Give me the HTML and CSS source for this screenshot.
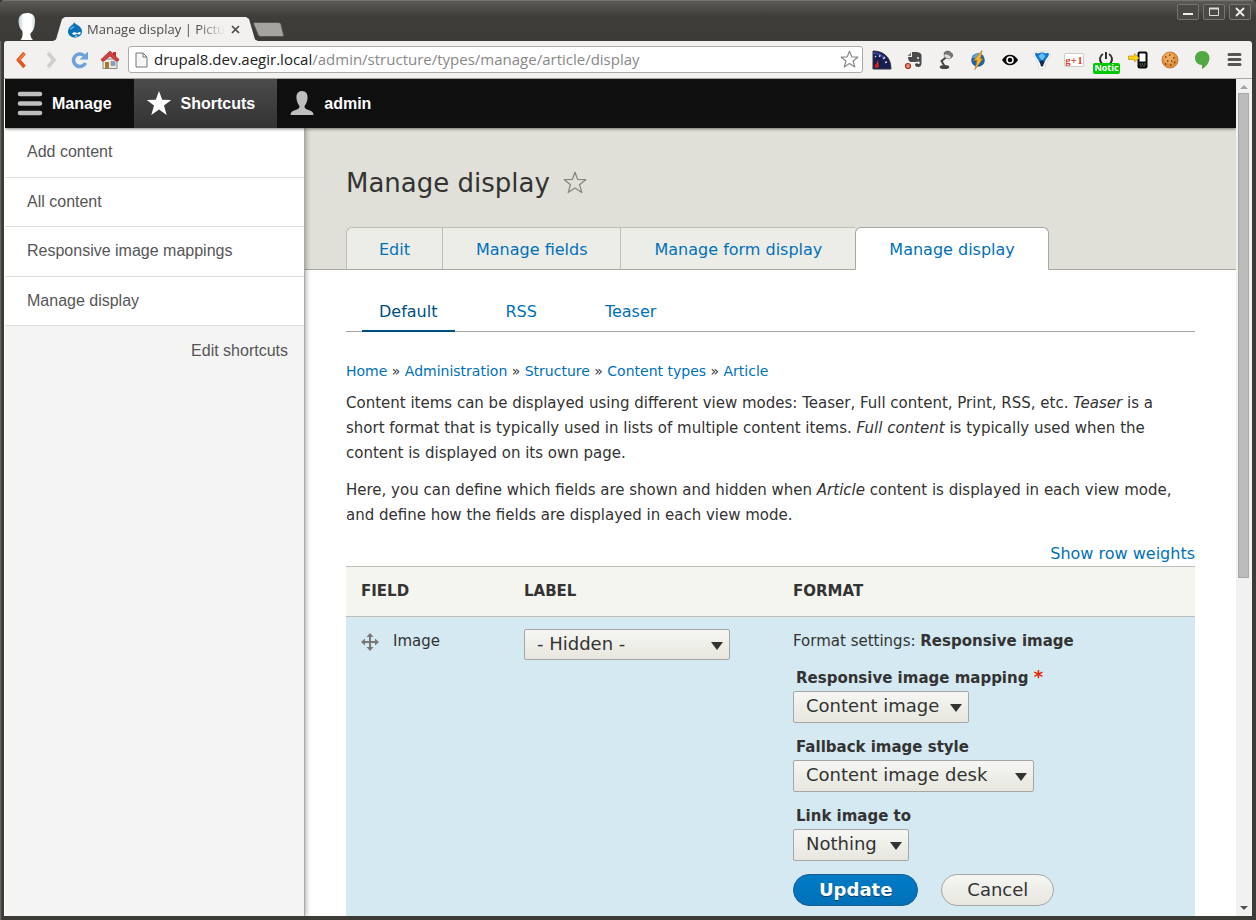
FILE: index.html
```html
<!DOCTYPE html>
<html lang="en">
<head>
<meta charset="utf-8">
<title>Manage display | Picture</title>
<link rel="stylesheet" href="styles.css">
</head>
<body>
<div class="window">
  <header class="titlebar">
    <svg class="ghost" width="20" height="29" viewBox="0 0 20 29" aria-hidden="true">
      <defs><linearGradient id="head" x1="0" x2="1"><stop offset="0" stop-color="#b9cad3"/><stop offset=".3" stop-color="#fff"/><stop offset=".75" stop-color="#fff"/><stop offset="1" stop-color="#cbd8de"/></linearGradient></defs>
      <path fill="url(#head)" d="M9 1c5 0 8 2.500 8 7 0 4-.5 8-2 10.500-.8 1.500-2 2-2.500 3-.3 2.500.5 4.500 2.500 6.500H2.500c2-2.500 2.500-6 1.800-9C1.500 16.500.5 12.500.5 9 .5 4 4 1 9 1z"/>
    </svg>
    <div class="tab">
      <svg width="16" height="17" viewBox="0 0 16 17" aria-hidden="true">
        <path fill="#0a72b8" d="M7 1c1 2 3 2.500 5 4 2 1.500 3 3.500 3 5.500C15 14 12 16.500 8 16.500S1 14 1 10.500C1 7 3 5.500 5 4 6 3.200 6.800 2.500 7 1z"/>
        <path fill="#6bb4e2" d="M3 8c1-2 3-2.500 4-3 1 0 0 1.500-1.500 2.500S3 9.500 3 8z"/>
        <path fill="#fff" d="M7.800 11.200c1 0 2 .8 2.500.8s1.500-1 2.700-1c1 0 1 2.500-.5 2.500-1 0-1.500-.8-2-.8-.7 0-1.500 1-3.200 1-3 0-2.500-2.500.5-2.500zM7.500 15c1-.8 2.500-.8 3.500 0-.8.700-2.800.7-3.500 0z"/>
      </svg>
      <span class="tab-title">Manage display | Pictu</span>
      <button class="tab-close" aria-label="Close tab"><svg width="9" height="9" viewBox="0 0 9 9"><path d="M1 1l7 7M8 1L1 8" stroke="#4a4a4a" stroke-width="1.700"/></svg></button>
    </div>
    <button class="new-tab" aria-label="New tab"><svg width="31" height="15" viewBox="0 0 31 15"><path d="M2 .5h23c2 0 2.500.8 3 2l2.500 10c.3 1.300-.2 2-1.500 2H8c-2 0-2.500-.8-3-2L.8 2.500C.4 1 .8.500 2 .500z" fill="#a5a49f" stroke="#55544f"/></svg></button>
    <div class="window-buttons">
      <button aria-label="Minimize"><svg width="12" height="12" viewBox="0 0 12 12"><path d="M1 8h10" stroke="#eeeeea" stroke-width="2"/></svg></button>
      <button aria-label="Maximize"><svg width="12" height="12" viewBox="0 0 12 12"><path d="M1.500 2.500h9v7h-9z" fill="none" stroke="#deded9"/><path d="M1 2.500h10" stroke="#deded9" stroke-width="2"/></svg></button>
      <button aria-label="Close"><svg width="12" height="12" viewBox="0 0 12 12"><path d="M2 2l8 8M10 2l-8 8" stroke="#eeeeea" stroke-width="1.800"/></svg></button>
    </div>
  </header>

  <div class="navbar">
    <button class="nav-button" aria-label="Back"><svg width="18" height="20" viewBox="0 0 18 20"><path d="M11.500 3L5.500 10l6 7" fill="none" stroke="#e2571e" stroke-width="3.600"/><path d="M11.500 3.500L6 10" fill="none" stroke="#f08546" stroke-width="1.500"/></svg></button>
    <button class="nav-button" aria-label="Forward"><svg width="18" height="20" viewBox="0 0 18 20"><path d="M6 3l6 7-6 7" fill="none" stroke="#d0cfcd" stroke-width="3.600"/></svg></button>
    <button class="nav-button" aria-label="Reload"><svg width="18" height="20" viewBox="0 0 18 20"><path d="M14.500 13A6.300 6.300 0 1 1 13 5.500" fill="none" stroke="#6fa3d8" stroke-width="3.600"/><path d="M17 1.500v8H8.500z" fill="#6fa3d8"/></svg></button>
    <button class="nav-button home" aria-label="Home"><svg width="20" height="20" viewBox="0 0 20 20"><path d="M13 2h3v5h-3z" fill="#c33"/><path d="M3 9h14v9.500H3z" fill="#eceae4" stroke="#8c8a84"/><path d="M5 12h4v6.500H5z" fill="#a9792b"/><path d="M11 11.500h4v4h-4z" fill="#7ba4cf" stroke="#888" stroke-width=".6"/><path d="M10 1L1 9.500l1 1.500h2l6-5 6 5h2l1-1.500z" fill="#cf4040" stroke="#a82a2a" stroke-width=".7"/></svg></button>
    <div class="omnibox">
      <svg width="13" height="16" viewBox="0 0 13 16" aria-hidden="true"><path d="M1 1h7l4 4v10H1z" fill="#f7f7f7" stroke="#777"/><path d="M8 1v4h4" fill="none" stroke="#777"/></svg>
      <div class="url" role="textbox" aria-label="Address">drupal8.dev.aegir.local<span class="path">/admin/structure/types/manage/article/display</span></div>
      <button class="bookmark" aria-label="Bookmark"><svg width="19" height="19" viewBox="0 0 19 19"><path d="M9.500 1.200l2.300 5.700 6 .3-4.700 3.800 1.700 6-5.300-3.500-5.300 3.500 1.700-6L1.200 7.200l6-.3z" fill="#fff" stroke="#8a8a8a" stroke-width="1.200" stroke-linejoin="round"/></svg></button>
    </div>
    <div class="extensions">
      <button aria-label="Speed"><svg width="20" height="20" viewBox="0 0 20 20"><path d="M1 1c9 0 18 5 18 18H1z" fill="#171d50" stroke="#34343e"/><path d="M1 3c5 0 9 2 12 6" fill="none" stroke="#35449a" stroke-width="2"/><path d="M3 6l1 1M8 5l-.5 2M13 7l-2 2M15 12l-2 .5" stroke="#dde" stroke-width="1.300"/><path d="M3 17l3-7 .8 7z" fill="#e32"/><circle cx="4.500" cy="16" r="2" fill="#c21"/></svg></button>
      <button aria-label="Clipper"><svg width="20" height="20" viewBox="0 0 20 20"><path d="M8 2h5c3 .5 4.500 1.500 4.500 3.500v7c0 3-1 4.500-3.500 4.500-2 0-3-1-3-3l2-1 1 1h1.500v-2.500L11 12H7c-2 0-3-2.500-3-5h4z" fill="#4a4a4a"/><path d="M3.500 6L7 2.500V6z" fill="#777"/><circle cx="14" cy="8" r="1" fill="#eee"/><circle cx="4" cy="16" r="2.500" fill="#ef8c75" stroke="#a82a1c" stroke-width="1.200"/></svg></button>
      <button aria-label="Lamp"><svg width="20" height="20" viewBox="0 0 20 20"><ellipse cx="8.500" cy="17" rx="4.800" ry="2" fill="#454545"/><path d="M8.500 16l-3-5 5-4" fill="none" stroke="#444" stroke-width="2"/><path d="M8 4c0-3 5-4 7.500-1 2 2 1 4-.5 5-2-2-4-3-7-4z" fill="#777" stroke="#4c4c4c" stroke-width=".8"/><ellipse cx="11.500" cy="6.500" rx="3.800" ry="2" transform="rotate(25 11.500 6.500)" fill="#ddd" stroke="#777" stroke-width=".6"/></svg></button>
      <button aria-label="Lightning"><svg width="20" height="20" viewBox="0 0 20 20"><circle cx="10" cy="10" r="6.800" fill="#1d64aa"/><path d="M4 8c2-4 5-5 8-4L9 8z" fill="#64a5d7"/><path d="M14 .5L5.500 10.500l3.500-.3L7 19.500l8-11-2.500.5z" fill="#f8b52c" stroke="#a46c12" stroke-width=".6"/></svg></button>
      <button aria-label="Eye"><svg width="20" height="20" viewBox="0 0 20 20"><path d="M2 10c4-7 12-7 16 0-4 7-12 7-16 0z" fill="#0a0a0a"/><circle cx="10" cy="10" r="3.800" fill="#fff"/><circle cx="10" cy="10" r="2.300" fill="#0a0a0a"/></svg></button>
      <button aria-label="Filter"><svg width="20" height="20" viewBox="0 0 20 20"><path d="M1.500 4c.5-2 2.500-3 4.500-2 2-1 6-1 8 0 2-1 4 0 4.500 2s-3.500 7-5 10v4c-2 1-5 1-7 0v-4C5 11 1.500 6 1.500 4z" fill="#fff" stroke="#ccc" stroke-width=".6"/><path d="M3 4c.5-1.500 2-1.500 3-.5 2-1.500 6-1.500 8 0 1-1 2.500-1 3 .5 0 2-3 5-4.500 8.500h-5C6 9 3 6 3 4z" fill="#1676c9"/><path d="M6.500 6L10 3l3.500 3L10 11z" fill="#68bdf1"/><path d="M7.500 11.500L10 10l2.500 1.500-1.500 5H9z" fill="#122c52"/></svg></button>
      <button class="plus-one" aria-label="Plus one">g+1</button>
      <button class="power" aria-label="Notices"><svg width="20" height="20" viewBox="0 0 20 20"><path d="M7 4a6 6 0 1 0 6 0" fill="none" stroke="#333" stroke-width="2"/><path d="M10 2v7" stroke="#333" stroke-width="2"/></svg><span class="badge">Notic</span></button>
      <button aria-label="Send to phone"><svg width="20" height="20" viewBox="0 0 20 20"><rect x="9.500" y="1.500" width="10" height="17" rx="2" fill="#0b0b0b"/><path d="M11.500 3.500h6v8h-6z" fill="#fff"/><path d="M11.500 14h1M14 14h1M16.500 14h1M12.500 16h1M15.500 16h1" stroke="#ccc"/><path d="M.5 6h6V3.500L11 8l-4.500 4V9.500h-6z" fill="#fbd315" stroke="#b88c0b" stroke-width=".7"/></svg></button>
      <button aria-label="Cookies"><svg width="20" height="20" viewBox="0 0 20 20"><circle cx="10" cy="10" r="8" fill="#dc8f3e" stroke="#c67a32"/><circle cx="9" cy="8" r="5.500" fill="#eaa95b"/><path d="M5 7h1.400M9 5h1.400M13 8h1.400M7 11h1.400M11 11h1.400M5 14h1.400M10 15h1.400M14 12.500h1.400" stroke="#713913" stroke-width="1.400"/></svg></button>
      <button aria-label="Hangouts"><svg width="20" height="20" viewBox="0 0 20 20"><path d="M10 1c5 0 7.500 3.500 7.500 7 0 5-4 9-7.500 11v-4c-4 0-7-3-7-7s3-7 7-7z" fill="#52a843"/></svg></button>
      <button aria-label="Menu"><svg width="20" height="20" viewBox="0 0 20 20"><path d="M5 4.500h11M5 9.500h11M5 14.500h11" stroke="#555" stroke-width="3" stroke-linecap="round"/></svg></button>
    </div>
  </div>

  <div class="viewport">
    <div class="page">
      <nav class="toolbar" aria-label="Toolbar">
        <a class="toolbar-tab" href="#"><svg width="26" height="26" viewBox="0 0 26 26"><path d="M3 3h20M3 12.500h20M3 22h20" stroke="#bebebe" stroke-width="4.600" stroke-linecap="round"/></svg>Manage</a>
        <a class="toolbar-tab current" href="#"><svg width="26" height="26" viewBox="0 0 26 26"><path d="M13 0l3.200 8.700 9 .3-7.200 5.600L20.700 24 13 18.600 5.300 24 8 14.600.8 9l9-.3z" fill="#fff"/></svg>Shortcuts</a>
        <a class="toolbar-tab" href="#"><svg width="26" height="26" viewBox="0 0 26 26"><path d="M13 0c4 0 6 3 5.500 7.500C18.200 11 17 13 15.500 15c0 2.500 1 3 4 4 3 1 5 2 5 5h-23c0-3 2-4 5-5s4-1.500 4-4C9 13 7.800 11 7.500 7.500 7 3 9 0 13 0z" fill="#bebebe"/></svg>admin</a>
      </nav>
      <div class="columns">
        <aside class="tray">
          <ul class="shortcuts">
            <li><a href="#">Add content</a></li>
            <li><a href="#">All content</a></li>
            <li><a href="#">Responsive image mappings</a></li>
            <li><a href="#">Manage display</a></li>
          </ul>
          <a class="edit-shortcuts" href="#">Edit shortcuts</a>
        </aside>
        <main class="main">
          <div class="page-head">
            <h1>Manage display
              <svg width="24" height="24" viewBox="0 0 24 24" aria-hidden="true"><path d="M12 1.200l2.700 7.300 8 .2-6.200 5 2.300 7.800L12 17l-6.800 4.500 2.300-7.800-6.200-5 8-.2z" fill="none" stroke="#85857a" stroke-width="1.200" stroke-linejoin="round"/></svg></h1>
            <nav class="primary-tabs" aria-label="Primary tabs">
              <a href="#">Edit</a><a href="#">Manage fields</a><a href="#">Manage form display</a><a class="active" href="#">Manage display</a>
            </nav>
          </div>
          <div class="content">
            <nav class="secondary-tabs" aria-label="Secondary tabs">
              <a class="active" href="#">Default</a><a href="#">RSS</a><a href="#">Teaser</a>
            </nav>
            <nav class="breadcrumb" aria-label="Breadcrumb"><a href="#">Home</a> » <a href="#">Administration</a> » <a href="#">Structure</a> » <a href="#">Content types</a> » <a href="#">Article</a></nav>
            <p>Content items can be displayed using different view modes: Teaser, Full content, Print, RSS, etc. <em>Teaser</em> is a short format that is typically used in lists of multiple content items. <em>Full content</em> is typically used when the content is displayed on its own page.</p>
            <p>Here, you can define which fields are shown and hidden when <em>Article</em> content is displayed in each view mode, and define how the fields are displayed in each view mode.</p>
            <div class="weights"><a href="#">Show row weights</a></div>
            <table class="fields">
              <colgroup><col class="col-field"><col class="col-label"><col></colgroup>
              <thead><tr><th scope="col">FIELD</th><th scope="col">LABEL</th><th scope="col">FORMAT</th></tr></thead>
              <tbody><tr>
                <td><div class="field-name"><svg width="18" height="18" viewBox="0 0 18 18" aria-hidden="true"><path d="M9 0l3.500 4H10v4h4V5.500L18 9l-4 3.500V10h-4v4h2.500L9 18l-3.500-4H8v-4H4v2.500L0 9l4-3.500V8h4V4H5.500z" fill="#777"/></svg>Image</div></td>
                <td><span class="select wide"><select aria-label="Label display"><option>- Hidden -</option></select></span></td>
                <td>
                  <div class="summary">Format settings: <strong>Responsive image</strong></div>
                  <div class="item"><label for="mapping">Responsive image mapping <span class="required">*</span></label><span class="select medium"><select id="mapping"><option>Content image</option></select></span></div>
                  <div class="item"><label for="fallback">Fallback image style</label><span class="select large"><select id="fallback"><option>Content image desk</option></select></span></div>
                  <div class="item"><label for="link">Link image to</label><span class="select small"><select id="link"><option>Nothing</option></select></span></div>
                  <div class="actions"><button class="button primary">Update</button><button class="button">Cancel</button></div>
                </td>
              </tr></tbody>
            </table>
          </div>
        </main>
      </div>
    </div>
    <div class="scrollbar" aria-hidden="true">
      <svg width="16" height="14" viewBox="0 0 16 14"><path d="M4 10l4-4 4 4z" fill="#a3a3a3"/></svg>
      <div class="track"><div class="thumb"></div></div>
      <svg width="16" height="14" viewBox="0 0 16 14"><path d="M4 4l4 4 4-4z" fill="#505050"/></svg>
    </div>
  </div>
</div>
</body>
</html>
```

FILE: styles.css
```css
* { box-sizing: border-box; }
body { margin: 0; background: #3c3b37; color: #333; font: 15px/25px "DejaVu Sans", sans-serif; }
a { color: #0071b8; text-decoration: none; }
button { padding: 0; border: 0; background: none; font: inherit; color: inherit; }
svg { display: block; flex: none; }

/* Window frame */
.window {
  display: flex; flex-direction: column; height: 100vh; overflow: hidden;
  padding: 0 4px 4px; border-radius: 5px 5px 0 0;
  background: #3c3b37; box-shadow: inset 1px 1px #666560, inset 2px 2px #45443f;
}
.titlebar {
  display: flex; flex: none; align-items: flex-end; height: 41px; margin: 0 -4px; padding-left: 18px;
  background: linear-gradient(#5b5a55, #3e3d39 16px, #3c3b37);
  border-top: 1px solid #77756f;
}
.ghost { margin-right: 15px; }
.tab {
  display: flex; align-items: center; width: 205px; height: 24px; padding: 0 18px 0 14px;
  background: #f2f1f0; color: #4c4c4c; font: 13px/22px "Open Sans", "Noto Sans", sans-serif;
  clip-path: polygon(0 100%, 3px 94%, 9px 8%, 12px 0, calc(100% - 12px) 0, calc(100% - 9px) 8%, calc(100% - 3px) 94%, 100% 100%);
}
.tab-title {
  flex: 1; margin: 0 6px 0 4px; white-space: nowrap;
  -webkit-mask-image: linear-gradient(90deg, #000 80%, transparent); mask-image: linear-gradient(90deg, #000 80%, transparent);
}
.new-tab { margin: 0 0 4px -5px; }
.window-buttons { display: flex; gap: 4px; align-self: flex-start; margin: 3px 5px 0 auto; }
.window-buttons button {
  display: grid; place-items: center; width: 22px; height: 16px;
  border: 1px solid #77766f; border-radius: 2px; background: #4a4944;
}
.navbar {
  display: flex; flex: none; align-items: center; height: 38px; padding: 0 8px 0 9px;
  background: #f2f1f0; border-bottom: 1px solid #a9a8a6; border-radius: 3px 3px 0 0;
}
.nav-button { margin-right: 11px; }
.nav-button.home { margin-right: 8px; }
.omnibox {
  display: flex; flex: 1; align-items: center; height: 27px; padding: 0 3px 0 6px;
  background: #fff; border: 1px solid #aaa; border-radius: 3px;
}
.url { flex: 1; margin-left: 6px; padding-bottom: 2px; font: 15px/22px "Open Sans", "Noto Sans", sans-serif; color: #222; white-space: nowrap; }
.path { color: #888; }
.extensions { display: flex; align-items: center; gap: 12px; margin-left: 9px; }
.extensions button { display: grid; place-items: center; width: 20px; height: 20px; }
.extensions .plus-one {
  height: 14px; border: 1px solid #ccc; border-radius: 2px; background: #fff;
  color: #d14836; font: bold 11px/10px "Liberation Serif", serif;
}
.power { position: relative; }
.badge {
  position: absolute; left: -3px; top: 13px; width: 27px; height: 11px; border-radius: 2px;
  background: #00c800; color: #fff; font: bold 9px/10px "Open Sans", sans-serif; text-align: center;
}

/* Browser viewport */
.viewport { display: flex; flex: 1; min-height: 0; background: #fff; }
.page { display: flex; flex: 1; flex-direction: column; min-width: 0; overflow: hidden; margin-left: 1px; }
.toolbar { display: flex; flex: none; height: 49px; background: #0f0f0f; box-shadow: 0 1px 3px rgba(0, 0, 0, .5); z-index: 2; }
.toolbar-tab {
  display: flex; align-items: center; gap: 9px; padding: 0 22px 0 12px;
  color: #fff; font: bold 16px/20px "Liberation Sans", Arial, sans-serif;
}
.toolbar-tab.current { background: linear-gradient(#4b4b4b, #333); }
.columns { display: flex; flex: 1; min-height: 0; }
.tray {
  flex: none; width: 300px; background: #f4f4f4; border-right: 1px solid #aaa;
  box-shadow: 1px 0 5px rgba(0, 0, 0, .35); z-index: 1;
  font: 16px/20px "Liberation Sans", Arial, sans-serif;
}
.tray a { color: #565656; }
.shortcuts { display: grid; grid-auto-rows: 1fr; height: 198px; margin: 0; padding: 0; list-style: none; background: #fff; }
.shortcuts li { display: flex; align-items: center; padding-left: 22px; border-bottom: 1px solid #ddd; }
.edit-shortcuts { display: block; padding: 15px 16px; text-align: right; }

.main { flex: 1; min-width: 0; background: #fff; }
.page-head { padding: 39px 41px 0; background: #e0e0d8; border-bottom: 1px solid #a6a6a6; }
h1 { display: flex; align-items: center; gap: 13px; margin: 0 0 28px; font-size: 26px; line-height: 32px; font-weight: 400; }
.primary-tabs { display: flex; margin-bottom: -1px; font-size: 16px; line-height: 20px; }
.primary-tabs a {
  padding: 12px 33px 9px; background: #edede8; white-space: nowrap;
  border: 1px solid #bdbdb9; border-right: 0; border-bottom-color: #a6a6a6;
}
.primary-tabs a:first-child { padding-left: 32px; padding-right: 32px; border-top-left-radius: 6px; }
.primary-tabs .active { background: #fff; border: 1px solid #a6a6a6; border-bottom-color: #fff; border-radius: 6px 6px 0 0; }
.content { padding: 20px 41px 0; }
.secondary-tabs { display: flex; gap: 33px; padding-left: 16px; border-bottom: 1px solid #a6a6a6; font-size: 16px; line-height: 20px; }
.secondary-tabs a { margin-bottom: -1px; padding: 12px 18px 8px 17px; border-bottom: 2px solid transparent; }
.secondary-tabs .active { color: #004f80; border-bottom-color: #004f80; }
.breadcrumb { margin: 29px 0 10px; font-size: 14px; line-height: 20px; }
p { margin: 0 0 12px; }
.weights { margin-top: 13px; font-size: 16px; line-height: 25px; text-align: right; }
.fields { width: 100%; border-collapse: collapse; table-layout: fixed; }
.col-field { width: 163px; }
.col-label { width: 269px; }
th { height: 50px; padding: 0 15px; text-align: left; background: #f5f5f0; border: solid #bfbfba; border-width: 1px 0; }
tbody td { padding: 12px 15px 40px; vertical-align: top; background: #d5e9f2; }
.field-name { display: flex; align-items: center; gap: 14px; }
.select { position: relative; display: block; }
.select::after {
  content: ""; position: absolute; right: 7px; top: 13px;
  border: solid transparent; border-width: 8px 6px 0; border-top-color: #333; pointer-events: none;
}
.select select {
  display: block; appearance: none; width: 100%; height: 31px; padding: 0 12px 2px; margin: 0;
  background: linear-gradient(#f6f6f3, #e7e7df); border: 1px solid #a6a6a6; border-radius: 2px;
  color: #333; font: 18px/24px "DejaVu Sans", sans-serif;
}
.item .select select { height: 32px; }
.wide { width: 206px; }
.medium { width: 176px; }
.large { width: 241px; }
.small { width: 116px; }
.item { margin-top: 12px; }
.item label { display: block; padding-left: 3px; font-weight: 700; }
.required { color: #e62600; font-size: 18px; line-height: 20px; }
.actions { display: flex; gap: 23px; margin-top: 13px; }
.button {
  height: 32px; padding: 0 25px 1px; border: 1px solid #a6a6a6; border-radius: 16px;
  background: linear-gradient(#f6f6f3, #e7e7df); font-size: 18px; line-height: 28px;
}
.button.primary { border-color: #1e5c90; background: linear-gradient(#007bc6, #0071b8); color: #fff; font-weight: 700; text-shadow: 0 1px rgba(0, 0, 0, .5); }

.scrollbar { display: flex; flex: none; flex-direction: column; width: 16px; background: #f1f1f1; }
.track { flex: 1; padding: 0 3px 0 2px; }
.thumb { height: 60%; background: #bcbcbc; border: 1px solid #a8a8a8; }
```
